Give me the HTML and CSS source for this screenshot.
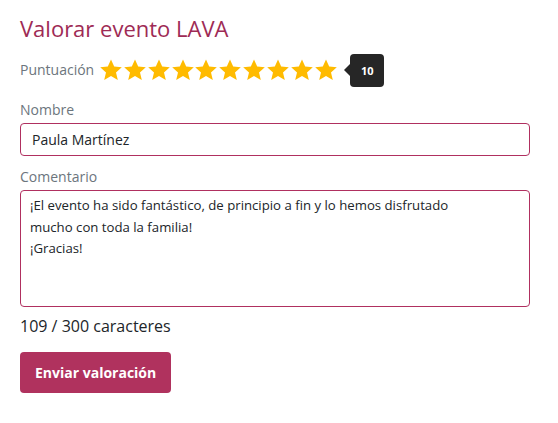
FILE: index.html
```html
<!DOCTYPE html>
<html lang="es">
<head>
<meta charset="utf-8">
<link rel="stylesheet" href="styles.css">
</head>
<body>
<main class="form">
  <h1 class="title">Valorar evento LAVA</h1>
  <div class="rating">
    <span class="label">Puntuación</span>
    <div class="stars">
      <svg class="star" viewBox="0 0 24 24"><path d="M12 1.5l3.2 7.1 7.6.7-5.8 5.1 1.8 7.6L12 18l-6.8 4 1.8-7.6-5.8-5.1 7.6-.7z"/></svg>
      <svg class="star" viewBox="0 0 24 24"><path d="M12 1.5l3.2 7.1 7.6.7-5.8 5.1 1.8 7.6L12 18l-6.8 4 1.8-7.6-5.8-5.1 7.6-.7z"/></svg>
      <svg class="star" viewBox="0 0 24 24"><path d="M12 1.5l3.2 7.1 7.6.7-5.8 5.1 1.8 7.6L12 18l-6.8 4 1.8-7.6-5.8-5.1 7.6-.7z"/></svg>
      <svg class="star" viewBox="0 0 24 24"><path d="M12 1.5l3.2 7.1 7.6.7-5.8 5.1 1.8 7.6L12 18l-6.8 4 1.8-7.6-5.8-5.1 7.6-.7z"/></svg>
      <svg class="star" viewBox="0 0 24 24"><path d="M12 1.5l3.2 7.1 7.6.7-5.8 5.1 1.8 7.6L12 18l-6.8 4 1.8-7.6-5.8-5.1 7.6-.7z"/></svg>
      <svg class="star" viewBox="0 0 24 24"><path d="M12 1.5l3.2 7.1 7.6.7-5.8 5.1 1.8 7.6L12 18l-6.8 4 1.8-7.6-5.8-5.1 7.6-.7z"/></svg>
      <svg class="star" viewBox="0 0 24 24"><path d="M12 1.5l3.2 7.1 7.6.7-5.8 5.1 1.8 7.6L12 18l-6.8 4 1.8-7.6-5.8-5.1 7.6-.7z"/></svg>
      <svg class="star" viewBox="0 0 24 24"><path d="M12 1.5l3.2 7.1 7.6.7-5.8 5.1 1.8 7.6L12 18l-6.8 4 1.8-7.6-5.8-5.1 7.6-.7z"/></svg>
      <svg class="star" viewBox="0 0 24 24"><path d="M12 1.5l3.2 7.1 7.6.7-5.8 5.1 1.8 7.6L12 18l-6.8 4 1.8-7.6-5.8-5.1 7.6-.7z"/></svg>
      <svg class="star" viewBox="0 0 24 24"><path d="M12 1.5l3.2 7.1 7.6.7-5.8 5.1 1.8 7.6L12 18l-6.8 4 1.8-7.6-5.8-5.1 7.6-.7z"/></svg>
    </div>
    <div class="tip">10</div>
  </div>
  <label class="label field-label">Nombre</label>
  <div class="input">Paula Martínez</div>
  <label class="label field-label field-label--second">Comentario</label>
  <div class="textarea">¡El evento ha sido fantástico, de principio a fin y lo hemos disfrutado mucho con toda la familia!<br>¡Gracias!</div>
  <div class="count">109 / 300 caracteres</div>
  <button class="btn">Enviar valoración</button>
</main>
</body>
</html>
```
FILE: styles.css
```css
* { box-sizing: border-box; }
body {
  margin: 0;
  background: #fff;
  font-family: "Open Sans", "Noto Sans", sans-serif;
  color: #212529;
}
.form {
  width: 510px;
  margin: 0 0 0 20px;
  padding-top: 12px;
  display: flex;
  flex-direction: column;
  align-items: flex-start;
}
.title {
  margin: 0;
  font-size: 22px;
  font-weight: 400;
  line-height: 32px;
  color: #9e2b55;
}
.rating {
  margin-top: 9px;
  display: flex;
  align-items: center;
  height: 34px;
}
.label {
  font-size: 14px;
  color: #6c757d;
  line-height: 20px;
}
.stars {
  display: flex;
  margin-left: 5px;
}
.star {
  width: 24px;
  height: 24px;
  fill: #ffbb00;
  display: block;
  margin-right: -0.2px;
}
.tip {
  position: relative;
  margin-left: 13px;
  width: 34px;
  height: 33px;
  background: #262626;
  color: #fff;
  border-radius: 4px;
  font-size: 11px;
  font-weight: 700;
  display: flex;
  align-items: center;
  justify-content: center;
}
.tip::before {
  content: "";
  position: absolute;
  left: -6px;
  top: 50%;
  margin-top: -6px;
  border-style: solid;
  border-width: 6px 6px 6px 0;
  border-color: transparent #262626 transparent transparent;
}
.field-label {
  display: block;
  margin-top: 13px;
  margin-bottom: 3px;
}
.field-label--second {
  margin-top: 11px;
}
.input {
  width: 510px;
  height: 33px;
  border: 1px solid #b03060;
  border-radius: 4px;
  padding: 0 11px;
  font-size: 14px;
  line-height: 31px;
  color: #212529;
}
.textarea {
  width: 510px;
  height: 117px;
  border: 1px solid #b03060;
  border-radius: 4px;
  padding: 4px 40px 4px 9px;
  font-size: 13.2px;
  line-height: 21.5px;
  color: #212529;
}
.count {
  margin-top: 8px;
  font-size: 16px;
  line-height: 22px;
}
.btn {
  margin-top: 15px;
  background: #b0325e;
  color: #fff;
  border: 0;
  border-radius: 4px;
  height: 41px;
  padding: 0 15px;
  font-family: "Open Sans", "Noto Sans", sans-serif;
  font-size: 14px;
  font-weight: 700;
}
```
